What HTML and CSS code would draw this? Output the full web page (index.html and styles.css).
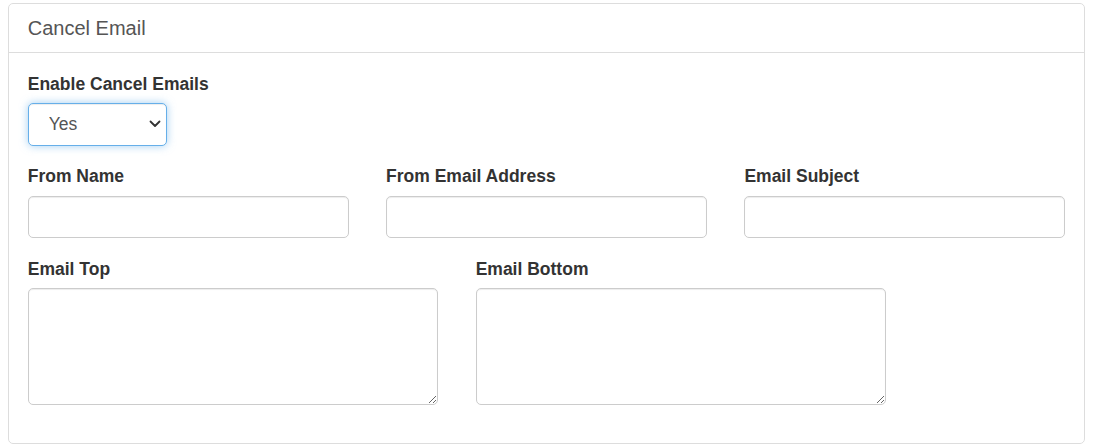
FILE: index.html
```html
<!DOCTYPE html>
<html lang="en">
<head>
<meta charset="utf-8">
<title>Cancel Email</title>
<link rel="stylesheet" href="styles.css">
</head>
<body>
<div class="panel">
  <div class="panel-heading">
    <h3 class="panel-title">Cancel Email</h3>
  </div>
  <div class="panel-body">
    <div class="form-group">
      <label class="label" for="enable">Enable Cancel Emails</label>
      <div class="select-wrap">
        <select id="enable" class="select">
          <option>Yes</option>
          <option>No</option>
        </select>
        <svg class="chevron" width="12" height="8" viewBox="0 0 12 8"><path d="M1.5 1.5 L6 6 L10.5 1.5" fill="none" stroke="#333" stroke-width="1.8" stroke-linecap="round" stroke-linejoin="round"/></svg>
      </div>
    </div>
    <div class="row">
      <div class="form-group col-4">
        <label class="label" for="fromName">From Name</label>
        <input id="fromName" class="control" type="text">
      </div>
      <div class="form-group col-4">
        <label class="label" for="fromEmail">From Email Address</label>
        <input id="fromEmail" class="control" type="text">
      </div>
      <div class="form-group col-4">
        <label class="label" for="subject">Email Subject</label>
        <input id="subject" class="control" type="text">
      </div>
    </div>
    <div class="row">
      <div class="form-group col-5">
        <label class="label" for="top">Email Top</label>
        <textarea id="top" class="control textarea"></textarea>
      </div>
      <div class="form-group col-5">
        <label class="label" for="bottom">Email Bottom</label>
        <textarea id="bottom" class="control textarea"></textarea>
      </div>
    </div>
  </div>
</div>
</body>
</html>
```

FILE: styles.css
```css
html, body {
  background: #fff;
}
body {
  margin: 3px 8px 8px;
  font-family: "Liberation Sans", Arial, sans-serif;
  font-size: 17.5px;
  color: #333;
}
.panel {
  border: 1px solid #ddd;
  border-radius: 5px;
  background: #fff;
}
.panel-heading {
  padding: 12.5px 18.75px;
  border-bottom: 1px solid #ddd;
}
.panel-title {
  margin: 0;
  font-size: 20px;
  line-height: 23px;
  font-weight: normal;
  color: #555;
}
.panel-body {
  padding: 18.75px;
}
.form-group {
  margin-bottom: 18.75px;
}
.row {
  display: grid;
  grid-template-columns: repeat(12, 1fr);
  column-gap: 37.5px;
}
.col-4 {
  grid-column: span 4;
}
.col-5 {
  grid-column: span 5;
}
.label {
  display: block;
  font-weight: bold;
  font-size: 17.5px;
  line-height: 25px;
  margin-bottom: 6.25px;
  color: #333;
}
.control {
  display: block;
  box-sizing: border-box;
  width: 100%;
  height: 42.5px;
  margin: 0;
  padding: 7.5px 15px;
  font-family: inherit;
  font-size: 17.5px;
  color: #555;
  background: #fff;
  border: 1px solid #ccc;
  border-radius: 5px;
  box-shadow: inset 0 1px 1px rgba(0, 0, 0, 0.075);
  outline: none;
}
.textarea {
  height: 117px;
  resize: vertical;
}
.select-wrap {
  position: relative;
  width: 139.5px;
}
.select {
  display: block;
  box-sizing: border-box;
  width: 139.5px;
  height: 42.5px;
  margin: 0;
  padding: 0 30px 0 20px;
  font-family: inherit;
  font-size: 17.5px;
  color: #555;
  background: #fff;
  border: 1px solid #66afe9;
  border-radius: 5px;
  box-shadow: inset 0 1px 1px rgba(0, 0, 0, 0.075), 0 0 8px rgba(102, 175, 233, 0.6);
  outline: none;
  appearance: none;
  -webkit-appearance: none;
}
.chevron {
  position: absolute;
  left: 121.5px;
  top: 17px;
  pointer-events: none;
}
```
